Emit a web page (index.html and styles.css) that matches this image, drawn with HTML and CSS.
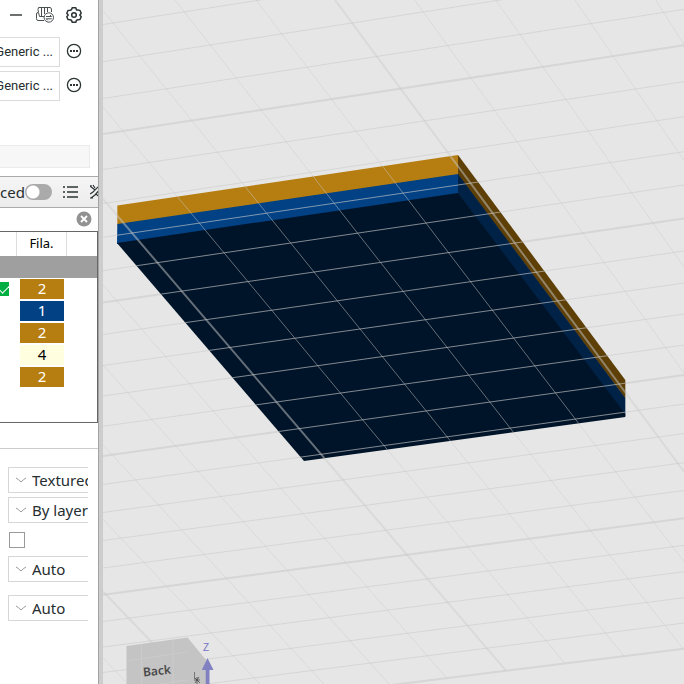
FILE: index.html
```
<!DOCTYPE html>
<html lang="en">
<head>
<meta charset="utf-8">
<title>Slicer</title>
<link rel="stylesheet" href="styles.css">
</head>
<body>
<div class="app">
  <aside class="sidebar">
    <header class="tools">
      <button class="icon-btn" aria-label="Remove filament"><svg width="14" height="16" viewBox="0 0 14 16"><path d="M1 8H13" stroke="#6b6f6f" stroke-width="2"/></svg></button>
      <button class="icon-btn" aria-label="Sync filaments"><svg width="20" height="18" viewBox="0 0 20 18" fill="none" stroke="#4a5050" stroke-width="1"><path d="M2.500 1.500H14Q15.500 1.500 15.500 4V6M8 14.500H2Q.5 14.500 .5 12.500V8Q.5 6.500 2 6.500M2.500 1.500Q1.500 3 2.500 6.500L3.500 10.500H8M5.500 2V10M8.500 2V8M11.500 2V6"/><circle cx="12.800" cy="11.500" r="4.700" fill="#fff"/><path d="M10 10.500H15.500L14 9M15.700 12.800H10.200L11.700 14.300"/></svg></button>
      <button class="icon-btn" aria-label="Filament settings"><svg width="18" height="18" viewBox="0 0 18 18" fill="none" stroke="#2c3434" stroke-width="1.500" stroke-linejoin="round"><path d="M7.200 1.800H10.800L11.500 3.900L13.500 4.100L15 4.500L16.200 7.300L14.800 9L16.200 10.700L15 13.500L13 13.700L11.500 14.200L10.800 16.200H7.200L6.500 14.200L5 13.700L3 13.500L1.800 10.700L3.200 9L1.800 7.300L3 4.500L5 4.200L6.500 3.800Z"/><circle cx="9" cy="9" r="2.300"/></svg></button>
    </header>
    <div class="filament">
      <button class="preset">Generic ...</button>
      <button class="icon-btn" aria-label="Edit first filament"><svg width="16" height="16" viewBox="0 0 16 16"><circle cx="8" cy="8" r="6.600" fill="none" stroke="#2c3434" stroke-width="1.300"/><path d="M4 7H6V9H4ZM7 7H9V9H7ZM10 7H12V9H10Z" fill="#2c3434"/></svg></button>
    </div>
    <div class="filament">
      <button class="preset">Generic ...</button>
      <button class="icon-btn" aria-label="Edit second filament"><svg width="16" height="16" viewBox="0 0 16 16"><circle cx="8" cy="8" r="6.600" fill="none" stroke="#2c3434" stroke-width="1.300"/><path d="M4 7H6V9H4ZM7 7H9V9H7ZM10 7H12V9H10Z" fill="#2c3434"/></svg></button>
    </div>
    <div class="strip"></div>
    <div class="modebar">
      <label class="mode" for="advanced">ced</label>
      <input class="switch" type="checkbox" role="switch" id="advanced">
      <button class="icon-btn" aria-label="Object list"><svg width="16" height="14" viewBox="0 0 16 14" stroke="#2c3434" stroke-width="1.400"><path d="M4 2H15M4 7H15M4 12H15M0 2H2M0 7H2M0 12H2"/></svg></button>
      <button class="icon-btn" aria-label="Compare presets"><svg width="16" height="16" viewBox="0 0 16 16" fill="none" stroke="#2c3434" stroke-width="1.200"><path d="M0 2L5 6M3 1L5 4M1 1V3M0 10L3 8L9 2M1 14L5 11L11 4M6 10L12 15M0 14H3"/></svg></button>
    </div>
    <div class="search">
      <button class="icon-btn" aria-label="Clear search"><svg width="16" height="16" viewBox="0 0 16 16"><circle cx="8" cy="8" r="7.500" fill="#929292"/><path d="M5 5L11 11M11 5L5 11" stroke="#fff" stroke-width="1.800"/></svg></button>
    </div>
    <div class="objects">
      <table>
        <colgroup><col class="c-print"><col class="c-fila"><col></colgroup>
        <thead><tr><th></th><th>Fila.</th><th></th></tr></thead>
        <tbody>
          <tr class="selected"><td></td><td></td><td></td></tr>
          <tr><td><input class="printable" type="checkbox" checked aria-label="Printable"></td><td><span class="chip ochre">2</span></td><td></td></tr>
          <tr><td></td><td><span class="chip blue">1</span></td><td></td></tr>
          <tr><td></td><td><span class="chip ochre">2</span></td><td></td></tr>
          <tr><td></td><td><span class="chip cream">4</span></td><td></td></tr>
          <tr><td></td><td><span class="chip ochre">2</span></td><td></td></tr>
        </tbody>
      </table>
    </div>
    <form class="settings">
      <div class="field"><svg width="12" height="8" viewBox="0 0 12 8"><path d="M1 2Q3 3 6 6Q9 3 11 2" fill="none" stroke="#999"/></svg><select aria-label="Plate type"><option>Textured</option></select></div>
      <div class="field"><svg width="12" height="8" viewBox="0 0 12 8"><path d="M1 2Q3 3 6 6Q9 3 11 2" fill="none" stroke="#999"/></svg><select aria-label="Print sequence"><option>By layer</option></select></div>
      <input class="tick" type="checkbox" aria-label="Spiral vase">
      <div class="field"><svg width="12" height="8" viewBox="0 0 12 8"><path d="M1 2Q3 3 6 6Q9 3 11 2" fill="none" stroke="#999"/></svg><select aria-label="First layer sequence"><option>Auto</option></select></div>
      <div class="field spaced"><svg width="12" height="8" viewBox="0 0 12 8"><path d="M1 2Q3 3 6 6Q9 3 11 2" fill="none" stroke="#999"/></svg><select aria-label="Other layers sequence"><option>Auto</option></select></div>
    </form>
  </aside>
  <main class="viewport">
    <svg class="scene" viewBox="103 0 581 684" preserveAspectRatio="xMinYMin slice">
      <defs>
        <clipPath id="model"><path d="M117 205.500L458 155L625.300 380V417L304 461L117 243Z"/></clipPath>
        <path id="rows" d="M103 24.500L684-66M103 61.700L684-28.600M103 98.500L684 9.300M103 169.500L684 81.700M103 203.500L684 116.700M103 237.300L684 151.700M103 270.700L684 185M103 334.500L684 251M103 365.500L684 283M103 396L684 314M103 426.300L684 345M103 484.500L684 404M103 512.500L684 433.500M103 540.500L684 462.700M103 568L684 490.500M103 621.500L684 545.300M103 647L684 571.700M103 672.500L684 597.700M103 697.200L684 623"/>
        <path id="rows-major" d="M103 134L684 45.300M103 302.500L684 218.600M103 456L684 375M103 594.700L684 518.300M103 720.800L684 648.800"/>
        <path id="cols" d="M103 107L564.700 663.300M103 10.500L624 656M175 0L683 648.700M256 0L684 561.700M414.700 0L684 373M495.700 0L684 267M575 0L684 160.500M655.700 0L684 44.500M103 285L447.300 678.700M103 365L350 640.700L389 684M103 445L300 658L324 684M103 519.300L166.700 586.300L260 684M103 658L128 684"/>
        <path id="cols-major" d="M335 0L684 471.700M103 199L506 670.700M103 591.500L192 684"/>
      </defs>
      <g class="grid">
        <use href="#rows"/><use class="soft" href="#cols"/>
        <use class="major" href="#rows-major"/><use class="major soft" href="#cols-major"/>
      </g>
      <path d="M117.300 205.500L458 155V175L117.300 225Z" fill="#b67e10"/>
      <path d="M117.300 224L458 174V194L117 244Z" fill="#014184"/>
      <path d="M458 155L625.300 380V398.500L458 175Z" fill="#5e4007"/>
      <path d="M458 174L625.300 398V416L458 194Z" fill="#002247"/>
      <path d="M117 243L458 193L625.300 414V417L304 461Z" fill="#001429"/>
      <g class="grid on-model" clip-path="url(#model)">
        <use href="#rows"/><use href="#rows-major"/><use class="soft" href="#cols"/><use class="heavy" href="#cols-major"/>
      </g>
      <path d="M126.500 646L187.500 637.500L206 660V684H126.500Z" fill="#c2c2c2" fill-opacity=".95"/>
      <path d="M127 661L186 652M141.500 644V684M173 640V684M160 684L187 680" class="cube-line"/>
      <text class="cube-label" transform="translate(143.500 676.500) rotate(-6)">Back</text>
      <path d="M194.500 672V679" fill="none" stroke="#777"/>
      <path d="M195 678L200 683M199 677L195 683M194 680L200 680M197 677V684" fill="none" stroke="#4a4a4a" stroke-width=".8"/>
      <path d="M205.700 684V670H201.800L207.500 658L213.500 670H209.500V684Z" fill="#8180c1"/>
      <text class="axis" x="203" y="651">Z</text>
    </svg>
  </main>
</div>
</body>
</html>
```
FILE: styles.css
```
* { box-sizing: border-box; }
body { margin: 0; font-family: "Noto Sans", "Open Sans", sans-serif; font-size: 15px; color: #262e30; }
button { border: 0; padding: 0; background: none; font: inherit; color: inherit; }
svg { display: block; flex: none; }
.app { display: flex; height: 100vh; overflow: hidden; background: #e6e6e6; }
.sidebar { flex: none; width: 103px; background: #fff; border-right: 4px solid #cdcdcd; box-shadow: inset -1px 0 #a2a2a2; padding-right: 1px; overflow: hidden; }
.icon-btn { display: block; flex: none; }
.tools { display: flex; align-items: center; height: 30px; margin-bottom: 7px; padding-left: 9px; gap: 12px; }
.tools .icon-btn:first-child { margin-right: 1px; }
.tools .icon-btn:last-child { margin-left: -3px; }
.filament { display: flex; align-items: flex-start; gap: 6px; margin-bottom: 4px; }
.filament .icon-btn { margin-top: 6px; }
.preset { display: flex; justify-content: flex-end; align-items: center; width: 60px; height: 30px; padding: 0 6px 2px 0; border: 1px solid #dbdbdb; border-left: 0; overflow: hidden; white-space: nowrap; font-family: Roboto, sans-serif; font-size: 13px; }
.strip { height: 23px; margin: 44px 8px 8px 0; background: #f7f7f7; border: 1px solid #ebebeb; border-left: 0; }
.modebar { display: flex; align-items: center; height: 32px; border-top: 1px solid #aaa; border-bottom: 1px solid #aaa; background: linear-gradient(#f5f5f5, #ececec); overflow: hidden; }
.mode { width: 25px; }
.switch { appearance: none; flex: none; width: 27px; height: 16px; margin: 0 11px 0 0; border-radius: 8px; background: radial-gradient(circle at 8px 8px, #fff 6px, #aaa 7px); }
.modebar .icon-btn:last-child { margin-left: 11px; }
.search { display: flex; justify-content: flex-end; align-items: center; height: 22px; padding-right: 6px; }
.objects { height: 192px; margin-top: 1px; border: 1px solid #666; border-left: 0; }
table { width: 100%; table-layout: fixed; border-collapse: separate; border-spacing: 0; }
.c-print { width: 17px; }
.c-fila { width: 50px; }
th, td { padding: 0; height: 22px; line-height: 20px; }
th { height: 24px; padding-bottom: 2px; font-weight: 400; font-size: 13px; color: #000; border-right: 1px solid #ddd; }
th:last-child { border-right: 0; }
.selected { background: #9f9f9f; }
.chip { display: block; width: 44px; height: 20px; margin-left: 3px; text-align: center; line-height: 19px; color: #fff; }
.ochre { background: #b67e10; }
.blue { background: #014184; }
.cream { background: #ffffdf; color: #000; }
.printable { appearance: none; display: block; width: 14px; height: 14px; margin: 0 0 0 -5px; background: #00ae42; overflow: hidden; }
.printable::after { content: ""; display: block; width: 9px; height: 5px; margin: 3px 0 0 4px; border: solid #fff; border-width: 0 0 1px 1px; transform: rotate(-45deg); }
.settings { margin-top: 25px; padding: 18px 10px 0 8px; border-top: 1px solid #ccc; display: flex; flex-direction: column; gap: 4px; }
.field { display: flex; align-items: center; gap: 5px; height: 26px; padding-left: 6px; border: 1px solid #d6d6d6; border-right: 0; overflow: hidden; }
select { appearance: none; flex: none; width: 80px; height: 24px; border: 0; padding: 0; background: none; font: inherit; color: inherit; }
.tick { appearance: none; width: 16px; height: 16px; margin: 5px 0 4px 1px; border: 1px solid #999; background: #fff; }
.spaced { margin-top: 9px; }
.viewport { flex: 1; min-width: 0; height: 100%; overflow: hidden; }
.scene { width: 100%; height: 100%; }
.grid { fill: none; stroke: #c8c8c8; stroke-opacity: .55; stroke-width: 1; }
.grid .major { stroke-width: 2; }
.grid .soft { stroke-opacity: .4; }
.on-model { stroke-opacity: .65; }
.on-model .soft { stroke-opacity: .5; }
.on-model .heavy { stroke-opacity: .5; stroke-width: 2; }
.cube-line { fill: none; stroke: #cbcbcb; }
.cube-label { font: 600 12px "Noto Sans", sans-serif; fill: #4a4a4a; }
.axis { font: 10px "Liberation Sans", sans-serif; fill: #7574c4; }
```
